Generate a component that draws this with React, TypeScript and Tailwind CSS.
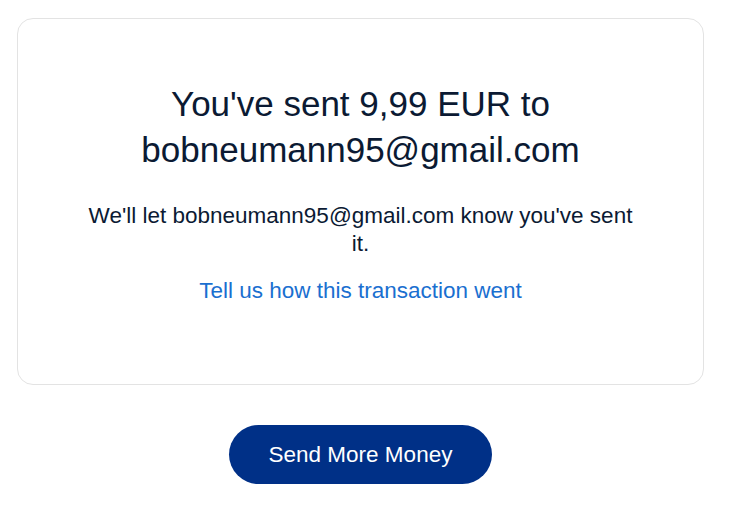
import React from "react";

export default function App() {
  return (
    <div className="min-h-[522px] w-[742px] bg-white" style={{ fontFamily: '"Liberation Sans", Arial, sans-serif' }}>
      <div className="ml-[17px] w-[687px] pt-[18px]">
        <div className="flex flex-col items-center rounded-[16px] border border-[#e3e3e3] pb-[79px] pt-[62px] text-center">
          <h1 className="text-[35px] leading-[46px] text-[#0b1a33]">
            You've sent 9,99 EUR to
            <br />
            bobneumann95@gmail.com
          </h1>
          <p className="mt-[29px] max-w-[556px] text-[22.5px] leading-[28px] text-[#0b1a33]">
            We'll let bobneumann95@gmail.com know you've sent it.
          </p>
          <a className="mt-[19px] text-[22.5px] leading-[28px] text-[#1a6fd0]">Tell us how this transaction went</a>
        </div>
        <div className="mt-[40px] flex justify-center">
          <button className="h-[59px] w-[263px] rounded-full bg-[#003087] text-[22.5px] text-white">
            Send More Money
          </button>
        </div>
      </div>
    </div>
  );
}
